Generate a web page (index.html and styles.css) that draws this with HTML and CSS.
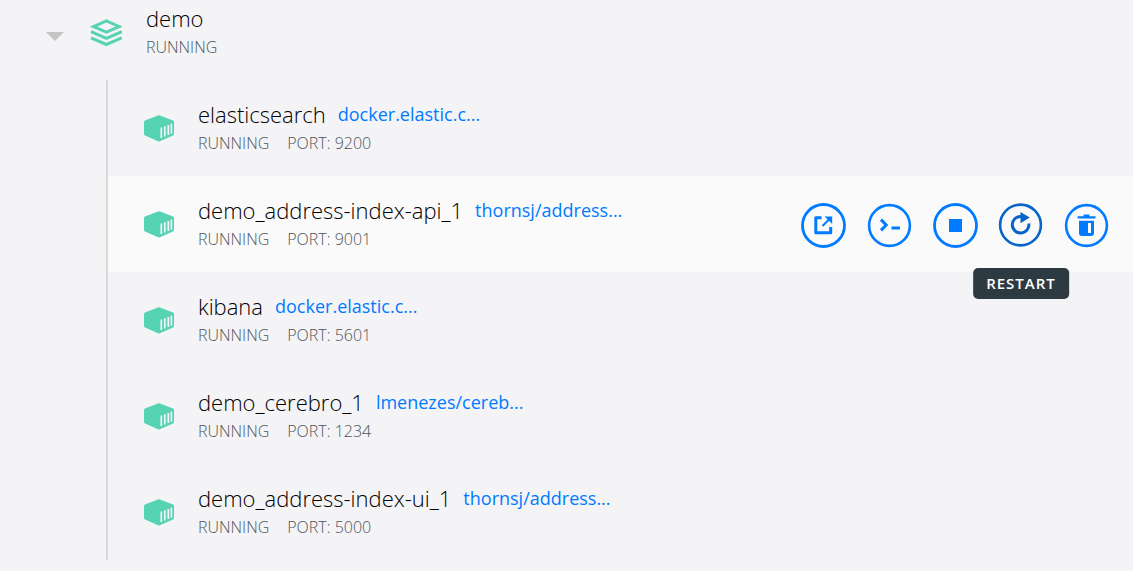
FILE: index.html
```html
<!DOCTYPE html>
<html lang="en">
<head>
<meta charset="utf-8">
<meta name="viewport" content="width=device-width, initial-scale=1">
<title>Containers</title>
<link rel="stylesheet" href="styles.css">
</head>
<body>
<svg class="sprite" aria-hidden="true">
  <symbol id="container" viewBox="0 0 30 27">
    <path fill="#56d3b2" d="M14 .4Q15 0 16 .4L29 5.6Q30 6 30 7V19Q30 20 29 20.5L16 26.2Q15 26.6 14 26.2L1 20.5Q0 20 0 19V7Q0 6 1 5.6Z"/>
    <path stroke="#f4f6f8" stroke-width="1.7" d="M17.3 12.6V23M20.8 11.2V21.4M24.3 9.9V20M27.4 8.6V18.8"/>
  </symbol>
</svg>
<main class="group">
  <header class="group-head">
    <button class="toggle" type="button" aria-label="Collapse demo" aria-expanded="true">
      <svg width="18" height="9" viewBox="0 0 18 9"><path fill="#c4c4c5" d="M0 0H18L9 9Z"/></svg>
    </button>
    <svg class="stack-icon" width="32" height="28" viewBox="0 0 32 28" fill="none" stroke="#56d3b2" stroke-width="3">
      <path d="M3.6 7.6L16.4 2L29.2 7.6L16.4 13.2Z"/>
      <path d="M1 12.6L16.4 19.3L31.8 12.6M1 18.8L16.4 25.5L31.8 18.8"/>
    </svg>
    <div class="info">
      <h1 class="name">demo</h1>
      <p class="meta"><span>RUNNING</span></p>
    </div>
  </header>
  <ul class="list">
    <li class="row">
      <svg class="box-icon"><use href="#container"/></svg>
      <div class="info">
        <div class="title"><h2 class="name">elasticsearch</h2><a class="image" href="#">docker.elastic.c...</a></div>
        <p class="meta"><span>RUNNING</span><span>PORT: 9200</span></p>
      </div>
    </li>
    <li class="row row-active">
      <svg class="box-icon"><use href="#container"/></svg>
      <div class="info">
        <div class="title"><h2 class="name">demo_address-index-api_1</h2><a class="image" href="#">thornsj/address...</a></div>
        <p class="meta"><span>RUNNING</span><span>PORT: 9001</span></p>
      </div>
      <div class="actions">
        <button class="action" type="button" aria-label="Open in browser">
          <svg viewBox="0 0 44 44" fill="none" stroke="currentColor"><circle cx="22.5" cy="22.5" r="21" stroke-width="2.8"/><path stroke-width="3" stroke-linejoin="round" d="M20.5 14.8H14.8V29.7H29.7V24"/><path stroke-width="2" d="M21.5 23L29 15.5"/><path fill="currentColor" stroke="none" d="M23.6 13.4H31.2V21Z"/></svg>
        </button>
        <button class="action" type="button" aria-label="Open terminal">
          <svg viewBox="0 0 44 44" fill="none" stroke="currentColor" stroke-width="3"><circle cx="22.5" cy="22.5" r="20.4" stroke-width="2.6"/><path d="M14 16.6L19.2 22L14 27.4M24.5 25H33"/></svg>
        </button>
        <button class="action" type="button" aria-label="Stop">
          <svg viewBox="0 0 44 44" fill="none" stroke="currentColor"><circle cx="22.5" cy="22.5" r="21" stroke-width="2.8"/><path fill="currentColor" stroke="none" d="M16 16H29V29H16Z"/></svg>
        </button>
        <div class="tip-wrap">
          <button class="action action-hover" type="button" aria-describedby="restart-tip" aria-label="Restart">
            <svg viewBox="0 0 44 44" fill="none" stroke="currentColor"><circle cx="21.5" cy="22" r="20.4" stroke-width="2.6"/><path stroke-width="3" d="M22 13.4A8.3 8.3 0 1 0 29.8 20.5"/><path fill="currentColor" stroke="none" d="M21.5 9L30.8 14.6L21.5 20.3Z"/></svg>
          </button>
          <div class="tip" role="tooltip" id="restart-tip">RESTART</div>
        </div>
        <button class="action" type="button" aria-label="Delete">
          <svg viewBox="0 0 44 44" fill="none" stroke="currentColor"><circle cx="21.5" cy="22.5" r="20.4" stroke-width="2.6"/><path fill="currentColor" stroke="none" fill-rule="evenodd" d="M18.6 11.5H24.4V13.2H30.5V15.6H12.6V13.2H18.6ZM14 17.7H29V30Q29 33 26 33H17Q14 33 14 30ZM23 20V30H26V20Z"/></svg>
        </button>
      </div>
    </li>
    <li class="row">
      <svg class="box-icon"><use href="#container"/></svg>
      <div class="info">
        <div class="title"><h2 class="name">kibana</h2><a class="image" href="#">docker.elastic.c...</a></div>
        <p class="meta"><span>RUNNING</span><span>PORT: 5601</span></p>
      </div>
    </li>
    <li class="row">
      <svg class="box-icon"><use href="#container"/></svg>
      <div class="info">
        <div class="title"><h2 class="name">demo_cerebro_1</h2><a class="image" href="#">lmenezes/cereb...</a></div>
        <p class="meta"><span>RUNNING</span><span>PORT: 1234</span></p>
      </div>
    </li>
    <li class="row">
      <svg class="box-icon"><use href="#container"/></svg>
      <div class="info">
        <div class="title"><h2 class="name">demo_address-index-ui_1</h2><a class="image" href="#">thornsj/address...</a></div>
        <p class="meta"><span>RUNNING</span><span>PORT: 5000</span></p>
      </div>
    </li>
  </ul>
</main>
</body>
</html>
```
FILE: styles.css
```css
* {
  box-sizing: border-box;
}

body {
  margin: 0;
  background: #f4f4f6;
  color: #000;
  font-family: "Open Sans", "Noto Sans", sans-serif;
  font-weight: 300;
}

button {
  padding: 0;
  border: 0;
  background: none;
  font: inherit;
  cursor: pointer;
}

svg {
  display: block;
  flex: none;
}

.sprite {
  position: absolute;
  width: 0;
  height: 0;
}

.group-head {
  display: flex;
  align-items: center;
  padding: 4px 24px 19px 46px;
}

.toggle {
  margin-top: 8px;
}

.stack-icon {
  margin: 0 24px 0 26px;
}

.list {
  margin: 0 0 0 106px;
  padding: 0;
  border-left: 2px solid #d8d8da;
  list-style: none;
}

.row {
  display: flex;
  align-items: center;
  padding: 20px 24px 19px 36px;
}

.row-active {
  background: #fafafa;
}

.box-icon {
  width: 30px;
  height: 27px;
  margin-right: 24px;
}

.info {
  display: grid;
  gap: 1px;
  min-width: 0;
}

.title {
  display: flex;
  align-items: center;
  gap: 12px;
}

.name {
  margin: 0;
  font-size: 22px;
  font-weight: 300;
  line-height: 28px;
}

.image {
  color: #007bff;
  font-size: 18px;
  font-weight: 400;
  line-height: 28px;
  text-decoration: none;
}

.meta {
  display: flex;
  gap: 18px;
  margin: 0;
  color: #4c5359;
  font-size: 16px;
  line-height: 28px;
}

.actions {
  display: flex;
  gap: 22px;
  margin-left: auto;
}

.action {
  display: block;
  width: 44px;
  height: 44px;
  color: #007bff;
}

.action svg {
  width: 44px;
  height: 44px;
  overflow: visible;
}

.action-hover {
  color: #0864c8;
}

.tip-wrap {
  position: relative;
}

.tip {
  position: absolute;
  top: 65px;
  left: 50%;
  padding: 0 13px;
  border-radius: 5px;
  background: #2e3a42;
  color: #fff;
  font-size: 15px;
  font-weight: 600;
  letter-spacing: 1px;
  line-height: 31px;
  transform: translateX(-50%);
}
```
